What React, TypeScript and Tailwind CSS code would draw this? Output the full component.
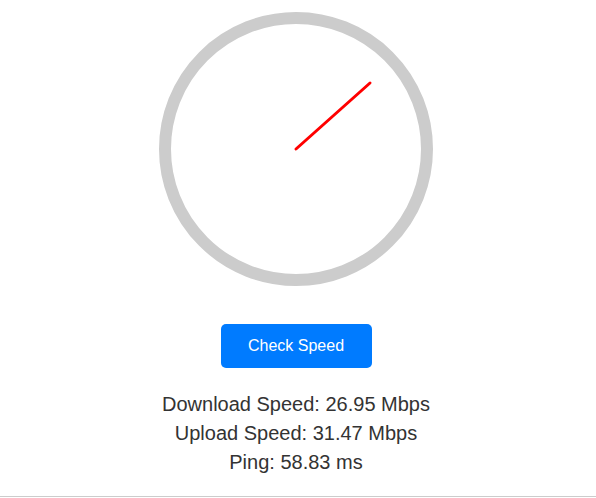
export default function App() {
  const stats = [
    "Download Speed: 26.95 Mbps",
    "Upload Speed: 31.47 Mbps",
    "Ping: 58.83 ms",
  ]

  return (
    <div
      className="flex h-[497px] w-full flex-col items-center border-b border-[#cccccc] bg-white pr-[4px] pt-[12px]"
      style={{ fontFamily: '"Liberation Sans", Arial, sans-serif' }}
    >
      {/* gauge */}
      <div className="relative h-[274px] w-[274px] rounded-full border-[12px] border-[#cccccc]">
        <svg className="absolute inset-0" width="250" height="250" viewBox="0 0 250 250">
          <line x1="125" y1="125" x2="199" y2="59" stroke="#ff0000" strokeWidth="3" strokeLinecap="round" />
        </svg>
      </div>

      <button className="mt-[38px] flex h-[44px] w-[151px] items-center justify-center rounded-[5px] bg-[#007bff] text-[16px] text-white">
        Check Speed
      </button>

      <div className="mt-[22px] flex flex-col items-center text-[20px] leading-[29px] text-[#333333]">
        {stats.map((s) => (
          <p key={s}>{s}</p>
        ))}
      </div>
    </div>
  )
}
